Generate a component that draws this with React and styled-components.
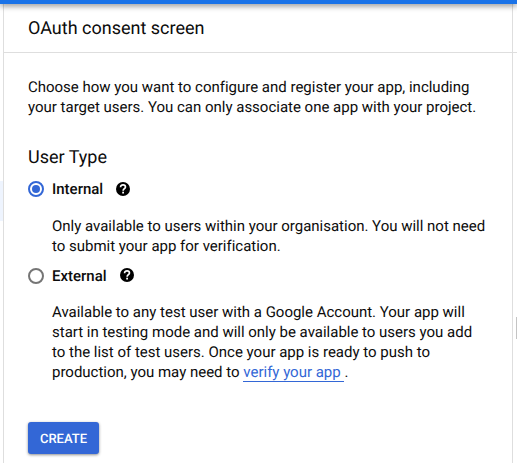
import React from "react";
import styled, { createGlobalStyle } from "styled-components";

const GlobalStyle = createGlobalStyle`
  * { box-sizing: border-box; }
  body { margin: 0; background: #fff; overflow: hidden; }
`;

const Page = styled.div`
  display: flex;
  flex-direction: column;
  width: 517px;
  height: 463px;
  overflow: hidden;
  background: #fff;
  color: #0c0c0c;
  font-family: Roboto, sans-serif;
  text-rendering: geometricPrecision;
`;

const TopBar = styled.div`
  flex: none;
  height: 4px;
  background: #1a73e8;
  box-shadow: 0 1px 6px rgba(0, 0, 0, 0.65);
  z-index: 1;
`;

const Columns = styled.div`
  flex: 1;
  display: grid;
  grid-template-columns: 3px 510px 4px;
`;

const NavEdge = styled.div`
  padding-top: 177px;
`;

const ActiveNavItem = styled.div`
  height: 40px;
  background: #eef4fe;
`;

const SideEdge = styled.div`
  display: flex;
  flex-direction: column;
  align-items: flex-end;
`;

const EdgeHeader = styled.div`
  width: 100%;
  height: 49px;
  border-bottom: 1px solid #dedede;
`;

const EdgeHandle = styled.div`
  width: 1px;
  height: 22px;
  margin-top: 264px;
  background: #c4c4c4;
`;

const Main = styled.main`
  border-left: 1px solid #dedede;
  border-right: 1px solid #dedede;
`;

const Header = styled.header`
  height: 49px;
  padding: 13px 24px 0;
  border-bottom: 1px solid #dedede;
`;

const Title = styled.h1`
  margin: 0;
  font-size: 18px;
  font-weight: 400;
  line-height: 24px;
`;

const Content = styled.div`
  padding: 24px 0 0 24px;
`;

const Text = styled.p`
  margin: 0;
  font-size: 15px;
  line-height: 20px;
  letter-spacing: -0.008px;
  white-space: nowrap;
`;

const SectionTitle = styled.h2`
  margin: 29px 0 0;
  font-size: 18px;
  font-weight: 400;
  line-height: 24px;
`;

const Option = styled.label`
  display: flex;
  align-items: center;
  height: 20px;
  margin-top: ${(p) => p.$top}px;
`;

const Radio = styled.span`
  display: grid;
  place-items: center;
  width: 16px;
  height: 16px;
  margin-right: 8px;
  border: 2px solid ${(p) => (p.$checked ? "#3367d6" : "#757575")};
  border-radius: 50%;

  &::after {
    content: "";
    width: 8px;
    height: 8px;
    border-radius: 50%;
    background: ${(p) => (p.$checked ? "#3367d6" : "transparent")};
  }
`;

const OptionLabel = styled.span`
  font-size: 15px;
  font-weight: 500;
  line-height: 20px;
  margin-right: 13px;
`;

const Help = styled.svg`
  width: 14px;
  height: 14px;
  margin-bottom: ${(p) => p.$lift || 0}px;
`;

const Details = styled.div`
  padding: ${(p) => p.$top}px 0 0 24px;
`;

const Link = styled.a`
  display: inline-block;
  height: 20px;
  color: #3367d6;
  border-bottom: 1px solid #3367d6;
  white-space: pre;
  vertical-align: top;
`;

const CreateButton = styled.button`
  display: block;
  width: 71px;
  height: 32px;
  margin-top: 40px;
  padding: 3px 0 0;
  border: 0;
  border-radius: 3px;
  background: #3367d6;
  box-shadow: 0 1px 3px rgba(0, 0, 0, 0.45);
  color: #fff;
  font: 500 13px Roboto, sans-serif;
  text-rendering: inherit;
`;

const HelpIcon = ({ lift }) => (
  <Help $lift={lift} viewBox="0 0 14 14" aria-hidden="true">
    <circle cx="7" cy="7" r="7" fill="#000" />
    <path
      d="M4.6 5.2C4.6 3.7 5.6 2.9 7.05 2.9s2.4.85 2.4 2.1c0 1.6-2.3 1.8-2.3 3.7"
      fill="none"
      stroke="#fff"
      strokeWidth="1.7"
    />
    <rect x="6.2" y="9.7" width="1.8" height="1.8" fill="#fff" />
  </Help>
);

export default function App() {
  return (
    <Page>
      <GlobalStyle />
      <TopBar />
      <Columns>
        <NavEdge>
          <ActiveNavItem />
        </NavEdge>
        <Main>
          <Header>
            <Title>OAuth consent screen</Title>
          </Header>
          <Content>
            <Text>
              Choose how you want to configure and register your app, including
              <br />
              your target users. You can only associate one app with your project.
            </Text>
            <SectionTitle>User Type</SectionTitle>
            <Option $top={9}>
              <Radio $checked />
              <OptionLabel>Internal</OptionLabel>
              <HelpIcon />
            </Option>
            <Details $top={17}>
              <Text>
                Only available to users within your organisation. You will not need
                <br />
                to submit your app for verification.
              </Text>
            </Details>
            <Option $top={10}>
              <Radio />
              <OptionLabel>External</OptionLabel>
              <HelpIcon lift={2} />
            </Option>
            <Details $top={16}>
              <Text>
                Available to any test user with a Google Account. Your app will
                <br />
                start in testing mode and will only be available to users you add
                <br />
                to the list of test users. Once your app is ready to push to
                <br />
                production, you may need to <Link>{"verify your app "}</Link>.
              </Text>
            </Details>
            <CreateButton>CREATE</CreateButton>
          </Content>
        </Main>
        <SideEdge>
          <EdgeHeader />
          <EdgeHandle />
        </SideEdge>
      </Columns>
    </Page>
  );
}
